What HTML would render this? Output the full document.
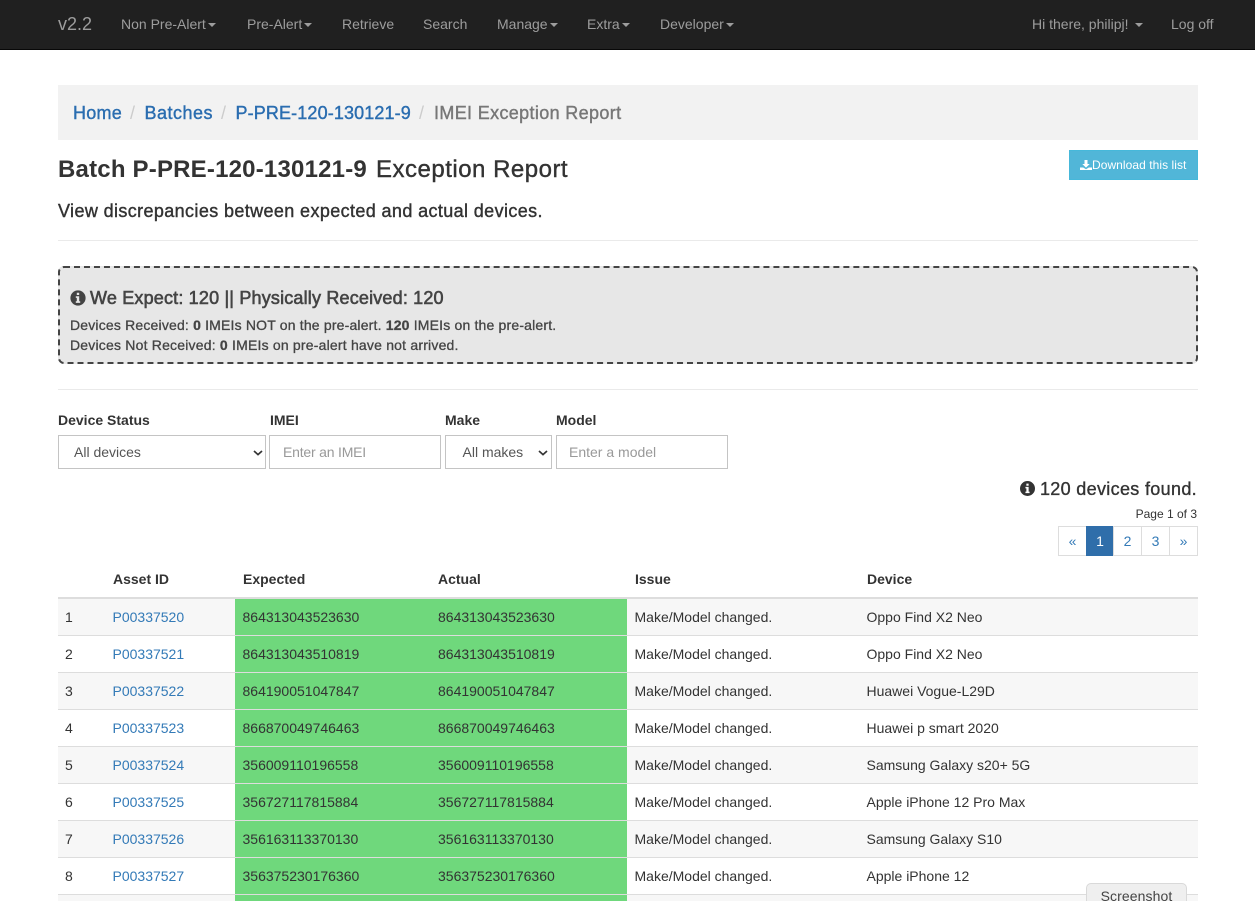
<!DOCTYPE html>
<html><head><meta charset="utf-8"><title>Exception Report</title>
<style>
*{box-sizing:border-box}
html,body{margin:0;padding:0;width:1255px;height:901px;overflow:hidden;background:#fff;font-family:"Liberation Sans",Arial,sans-serif;font-size:14px;color:#333}
#p{position:relative;width:1255px;height:901px;overflow:hidden;background:#fff}
.a{position:absolute;white-space:nowrap}
.nav{position:absolute;left:0;top:0;width:1255px;height:50px;background:#202020;border-bottom:1px solid #080808}
.nav .a{top:0;line-height:49px;color:#9d9d9d;font-size:14px}
.caret{display:inline-block;width:0;height:0;margin-left:2px;vertical-align:middle;border-top:4px solid #9d9d9d;border-left:4px solid transparent;border-right:4px solid transparent}
a{color:#337ab7;text-decoration:none}
.bcbg{position:absolute;left:58px;top:85px;width:1140px;height:55px;background:#f2f2f2}
.bc{top:85px;font-size:18px;line-height:56px;color:#777;-webkit-text-stroke:.4px currentColor;letter-spacing:.25px}
.bc a{color:#2a6db0}
.sep{top:85px;font-size:18px;line-height:56px;color:#ccc}
.hr{position:absolute;left:58px;width:1140px;height:1px;background:#eaeaea}
.box{position:absolute;left:58px;top:266px;width:1140px;height:98px;background:#e7e7e7;border:2px dashed #444;border-radius:6px}
.lab{font-weight:bold;top:411px;line-height:18px}
.ctl{position:absolute;top:435px;height:34px;border:1px solid #c4c4c4;background:#fff;line-height:32px;color:#555}
.ph{color:#999;padding-left:13px}
.sel{padding-left:15px}
.pg{position:absolute;top:526px;height:30px;border:1px solid #ddd;line-height:28px;text-align:center;color:#337ab7;background:#fff}
.row{position:absolute;left:58px;width:1140px;height:37px;border-bottom:1px solid #ddd}
.row.o{background:#f7f7f7}
.g{position:absolute;left:177px;width:392px;top:0;height:37px;background:#6fd87c;border-bottom:1px solid #ddd}
.row span{position:absolute;top:0;line-height:37px;white-space:nowrap}
.h{top:570px;font-weight:bold;line-height:18px}
svg{display:block}
.shot{position:absolute;left:1086px;top:883px;width:101px;height:30px;background:#efefef;border:1px solid #d9d9d9;border-radius:5px;text-align:center;line-height:25px;font-size:14px;color:#444;letter-spacing:.1px}
</style></head><body>
<div id="p">
<div class="nav">
<div class="a" style="left:58px;font-size:18px">v2.2</div>
<div class="a" style="left:121px">Non Pre-Alert<span class="caret"></span></div>
<div class="a" style="left:247px">Pre-Alert<span class="caret"></span></div>
<div class="a" style="left:342px">Retrieve</div>
<div class="a" style="left:423px">Search</div>
<div class="a" style="left:497px">Manage<span class="caret"></span></div>
<div class="a" style="left:587px">Extra<span class="caret"></span></div>
<div class="a" style="left:660px">Developer<span class="caret"></span></div>
<div class="a" style="left:1032px">Hi there, philipj! <span class="caret" style="margin-left:3px"></span></div>
<div class="a" style="left:1171px">Log off</div>
</div>

<div class="bcbg"></div>
<div class="a bc" style="left:73px"><a href="#">Home</a></div>
<div class="a sep" style="left:130px">/</div>
<div class="a bc" style="left:144.5px;letter-spacing:.5px"><a href="#">Batches</a></div>
<div class="a sep" style="left:221px">/</div>
<div class="a bc" style="left:235.5px;letter-spacing:.13px"><a href="#">P-PRE-120-130121-9</a></div>
<div class="a sep" style="left:419px">/</div>
<div class="a bc" style="left:434px;letter-spacing:.35px">IMEI Exception Report</div>

<div class="a" style="left:58px;top:155px;font-size:24px;line-height:30px;font-weight:bold;letter-spacing:.2px">Batch P-PRE-120-130121-9</div>
<div class="a" style="left:376px;top:155px;font-size:24px;line-height:30px;letter-spacing:.5px;-webkit-text-stroke:.4px #333">Exception Report</div>
<div class="a" style="left:1069px;top:150px;width:129px;height:30px;background:#51b6d8;border:1px solid #46b8da;color:#fff;font-size:12px;line-height:28px;padding-left:10px;display:flex;align-items:center;letter-spacing:.06px">
<svg width="12" height="12" viewBox="0 0 12 12"><path d="M4.5 1h3v4h2.2L6 8.6 2.3 5h2.2zM0 8.5h3.2L6 10.2l2.8-1.7H12V11H0z" fill="#fff"/></svg>Download this list</div>
<div class="a" style="left:58px;top:201px;font-size:18px;line-height:20px;letter-spacing:.38px;-webkit-text-stroke:.4px #333">View discrepancies between expected and actual devices.</div>
<div class="hr" style="top:240px"></div>

<div class="box"></div>
<div class="a" style="left:70px;top:290px"><svg width="16" height="16" viewBox="0 0 16 16"><circle cx="8" cy="8" r="7.6" fill="#444"/><path d="M6.8 2.8h2.4v2.2H6.8zM5.8 6.3h3.4v5h1v1.6H5.8v-1.6h1V7.9h-1z" fill="#e7e7e7"/></svg></div>
<div class="a" style="left:90px;top:287px;font-size:18px;line-height:22px;color:#444;letter-spacing:.18px;-webkit-text-stroke:.6px #444">We Expect: 120 || Physically Received: 120</div>
<div class="a" style="left:70px;top:316px;line-height:18px;font-size:14px;color:#444;letter-spacing:.18px;-webkit-text-stroke:.3px #444">Devices Received: <b>0</b> IMEIs NOT on the pre-alert. <b>120</b> IMEIs on the pre-alert.</div>
<div class="a" style="left:70px;top:336px;line-height:18px;font-size:14px;color:#444;letter-spacing:.2px;-webkit-text-stroke:.3px #444">Devices Not Received: <b>0</b> IMEIs on pre-alert have not arrived.</div>
<div class="hr" style="top:389px"></div>

<div class="a lab" style="left:58px">Device Status</div>
<div class="a lab" style="left:270px">IMEI</div>
<div class="a lab" style="left:445px">Make</div>
<div class="a lab" style="left:556px">Model</div>
<div class="ctl sel" style="left:58px;width:208px">All devices<svg style="position:absolute;left:194px;top:14px" width="10" height="6" viewBox="0 0 10 6"><path d="M1 1l4 3.6L9 1" fill="none" stroke="#333" stroke-width="1.7"/></svg></div>
<div class="ctl ph" style="left:269px;width:172px;letter-spacing:-.2px">Enter an IMEI</div>
<div class="ctl sel" style="left:445px;width:107px;padding-left:16.5px">All makes<svg style="position:absolute;left:92px;top:14px" width="10" height="6" viewBox="0 0 10 6"><path d="M1 1l4 3.6L9 1" fill="none" stroke="#333" stroke-width="1.7"/></svg></div>
<div class="ctl ph" style="left:556px;width:172px;padding-left:12px">Enter a model</div>

<div class="a" style="left:1020px;top:481px"><svg width="15" height="15" viewBox="0 0 16 16"><circle cx="8" cy="8" r="8" fill="#333"/><path d="M6.8 2.8h2.4v2.2H6.8zM5.8 6.3h3.4v5h1v1.6H5.8v-1.6h1V7.9h-1z" fill="#fff"/></svg></div>
<div class="a" style="right:58px;top:478px;font-size:18px;line-height:22px;letter-spacing:.33px;-webkit-text-stroke:.35px #333">120 devices found.</div>
<div class="a" style="right:58px;top:506px;font-size:12px;line-height:17px">Page 1 of 3</div>
<div class="pg" style="left:1058px;width:29px">«</div>
<div class="pg" style="left:1086px;width:28px;background:#2f6eaa;border-color:#2f6eaa;color:#fff">1</div>
<div class="pg" style="left:1113px;width:29px">2</div>
<div class="pg" style="left:1141px;width:29px">3</div>
<div class="pg" style="left:1169px;width:29px">»</div>

<div class="a h" style="left:113px">Asset ID</div>
<div class="a h" style="left:243px">Expected</div>
<div class="a h" style="left:438px">Actual</div>
<div class="a h" style="left:635px">Issue</div>
<div class="a h" style="left:867px">Device</div>
<div style="position:absolute;left:58px;top:597px;width:1140px;height:2px;background:#ddd"></div>

<div class="row o" style="top:599px;height:37px"><div class="g"></div><span style="left:7px">1</span><span style="left:54.5px"><a href="#">P00337520</a></span><span style="left:184.5px">864313043523630</span><span style="left:380px">864313043523630</span><span style="left:576.5px">Make/Model changed.</span><span style="left:808.5px">Oppo Find X2 Neo</span></div>
<div class="row" style="top:636px"><div class="g"></div><span style="left:7px">2</span><span style="left:54.5px"><a href="#">P00337521</a></span><span style="left:184.5px">864313043510819</span><span style="left:380px">864313043510819</span><span style="left:576.5px">Make/Model changed.</span><span style="left:808.5px">Oppo Find X2 Neo</span></div>
<div class="row o" style="top:673px"><div class="g"></div><span style="left:7px">3</span><span style="left:54.5px"><a href="#">P00337522</a></span><span style="left:184.5px">864190051047847</span><span style="left:380px">864190051047847</span><span style="left:576.5px">Make/Model changed.</span><span style="left:808.5px">Huawei Vogue-L29D</span></div>
<div class="row" style="top:710px"><div class="g"></div><span style="left:7px">4</span><span style="left:54.5px"><a href="#">P00337523</a></span><span style="left:184.5px">866870049746463</span><span style="left:380px">866870049746463</span><span style="left:576.5px">Make/Model changed.</span><span style="left:808.5px">Huawei p smart 2020</span></div>
<div class="row o" style="top:747px"><div class="g"></div><span style="left:7px">5</span><span style="left:54.5px"><a href="#">P00337524</a></span><span style="left:184.5px">356009110196558</span><span style="left:380px">356009110196558</span><span style="left:576.5px">Make/Model changed.</span><span style="left:808.5px">Samsung Galaxy s20+ 5G</span></div>
<div class="row" style="top:784px"><div class="g"></div><span style="left:7px">6</span><span style="left:54.5px"><a href="#">P00337525</a></span><span style="left:184.5px">356727117815884</span><span style="left:380px">356727117815884</span><span style="left:576.5px">Make/Model changed.</span><span style="left:808.5px">Apple iPhone 12 Pro Max</span></div>
<div class="row o" style="top:821px"><div class="g"></div><span style="left:7px">7</span><span style="left:54.5px"><a href="#">P00337526</a></span><span style="left:184.5px">356163113370130</span><span style="left:380px">356163113370130</span><span style="left:576.5px">Make/Model changed.</span><span style="left:808.5px">Samsung Galaxy S10</span></div>
<div class="row" style="top:858px"><div class="g"></div><span style="left:7px">8</span><span style="left:54.5px"><a href="#">P00337527</a></span><span style="left:184.5px">356375230176360</span><span style="left:380px">356375230176360</span><span style="left:576.5px">Make/Model changed.</span><span style="left:808.5px">Apple iPhone 12</span></div>
<div class="row o" style="top:895px"><div class="g"></div></div>
<div class="shot">Screenshot</div>
</div>
</body></html>
